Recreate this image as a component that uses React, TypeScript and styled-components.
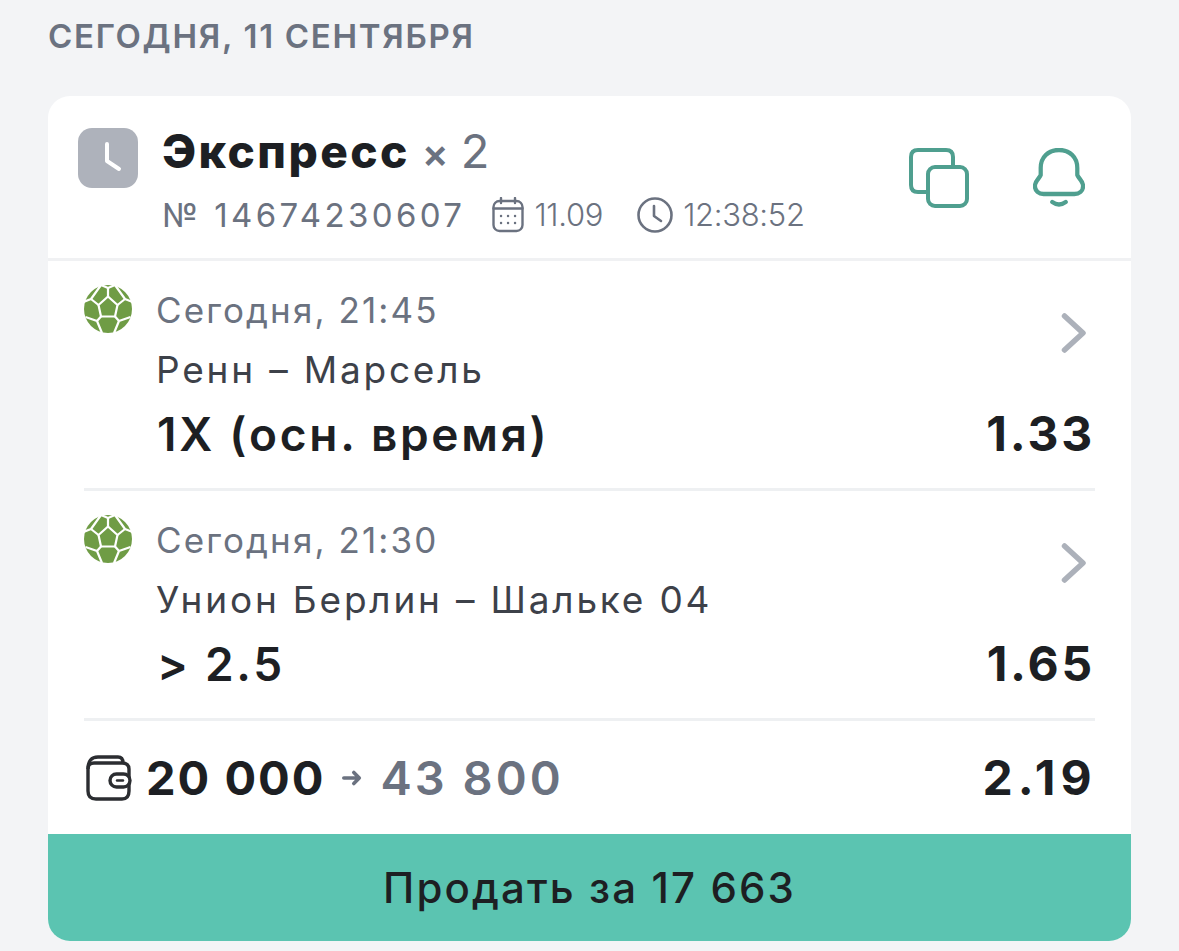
import styled, { createGlobalStyle } from 'styled-components';

const GlobalStyle = createGlobalStyle`
    html, body {
        margin: 0;
        padding: 0;
        background: #f3f4f6;
        overflow: hidden;
    }
    body {
        font-family: Inter, "Noto Sans", "Liberation Sans", sans-serif;
    }
`;

const SoccerBall = () => (
    <svg width="50" height="50" viewBox="1 1 50 50">
        <circle cx="25" cy="25" r="24" fill="#6f9c45"/>
        <g stroke="#fff" strokeWidth="2.2" fill="none" strokeLinejoin="round">
            <polygon points="25,12.5 34.5,21 32,32.5 18,32.5 15.5,21"/>
            <path d="M25 12.5 L25 4 M34.5 21 L42 15 M32 32.5 L36 37 M18 32.5 L14 37 M15.5 21 L8 15"/>
            <path d="M18 1 L25 4 L32 1 M32 1 L42 15 L49.5 18 M18 1 L8 15 L0.5 18"/>
            <path d="M31 49 L36 37 L47.5 33 M19 49 L14 37 L2.5 33"/>
        </g>
    </svg>
);

const Chevron = () => (
    <ChevronSvg width="26" height="40" viewBox="0 0 26 40">
        <path d="M3.5 3 L22 20 L3.5 37" fill="none" stroke="#acb1ba" strokeWidth="5.5" strokeLinecap="round" strokeLinejoin="round"/>
    </ChevronSvg>
);

type BetProps = { time: string; teams: string; pick: string; odds: string };

const Bet = ({ time, teams, pick, odds }: BetProps) => (
    <BetRow>
        <BallCol><SoccerBall/></BallCol>
        <BetBody>
            <BetTime>{time}</BetTime>
            <BetTeams>{teams}</BetTeams>
            <BetBottom>
                <BetPick>{pick}</BetPick>
                <BetOdds>{odds}</BetOdds>
            </BetBottom>
        </BetBody>
        <Chevron/>
    </BetRow>
);

export default function App() {
    return (
        <Page>
            <GlobalStyle/>
            <DayTitle>СЕГОДНЯ, 11 СЕНТЯБРЯ</DayTitle>
            <Card>
                <Header>
                    <StatusIcon>
                        <svg width="60" height="60" viewBox="0 0 60 60">
                            <path d="M29 16 V33 L41 41" fill="none" stroke="#fff" strokeWidth="4" strokeLinecap="round" strokeLinejoin="round"/>
                        </svg>
                    </StatusIcon>
                    <HeaderText>
                        <TitleLine>
                            <Title>Экспресс</Title>
                            <Times>×</Times>
                            <Count>2</Count>
                        </TitleLine>
                        <MetaLine>
                            <TicketNo>№ 14674230607</TicketNo>
                            <MetaItem>
                                <svg width="32" height="36" viewBox="0 0 32 36" fill="none" stroke="#6b7280" strokeWidth="2.4" strokeLinecap="round">
                                    <rect x="1.5" y="4" width="29" height="30" rx="6"/>
                                    <path d="M1.5 11.5 H30.5 M9 1 V6 M23 1 V6"/>
                                    <path d="M9 19 h.1 M16 19 h.1 M23 19 h.1 M9 26 h.1 M16 26 h.1 M23 26 h.1" strokeWidth="2.4"/>
                                </svg>
                                <MetaValue>11.09</MetaValue>
                            </MetaItem>
                            <MetaItem>
                                <svg width="36" height="36" viewBox="0 0 36 36" fill="none" stroke="#6b7280" strokeWidth="2.6" strokeLinecap="round" strokeLinejoin="round">
                                    <circle cx="18" cy="18" r="16.5"/>
                                    <path d="M17 9 V19 L24 24"/>
                                </svg>
                                <MetaValue>12:38:52</MetaValue>
                            </MetaItem>
                        </MetaLine>
                    </HeaderText>
                    <HeaderActions>
                        <svg width="60" height="60" viewBox="0 0 60 60" fill="none" stroke="#4f9f8f" strokeWidth="4">
                            <path d="M21 44 H9 Q2 44 2 37 V9 Q2 2 9 2 H37 Q44 2 44 9 V19"/>
                            <rect x="19" y="19" width="39" height="39" rx="7"/>
                        </svg>
                        <svg width="52" height="60" viewBox="0 0 54 60" preserveAspectRatio="none" fill="none" stroke="#4f9f8f" strokeWidth="4.4" strokeLinecap="round">
                            <path d="M8 27 V20 C8 9 16 2 27 2 C38 2 46 9 46 20 V27 C47 30 52 33 52 38 C52 43 48 46 43 46 H11 C6 46 2 43 2 38 C2 33 7 30 8 27 Z"/>
                            <path d="M20 54 Q27 59 34 54"/>
                        </svg>
                    </HeaderActions>
                </Header>
                <Bet time="Сегодня, 21:45" teams="Ренн – Марсель" pick="1X (осн. время)" odds="1.33"/>
                <Divider/>
                <Bet time="Сегодня, 21:30" teams="Унион Берлин – Шальке 04" pick="> 2.5" odds="1.65"/>
                <Divider/>
                <Totals>
                    <svg width="46" height="46" viewBox="0 0 46 46" fill="none" stroke="#2b2d31" strokeWidth="3.4" strokeLinejoin="round">
                        <path d="M2 14 V36 Q2 44 10 44 H36 Q43 44 43 36 V14 Q43 8 36 8 H8 Q2 8 2 14 Z"/>
                        <path d="M2 14 Q2 2 12 2 H32 Q37 2 37 8"/>
                        <rect x="24" y="19" width="20" height="13" rx="6.5" fill="#fff"/>
                        <path d="M31 25.5 H37" strokeWidth="2.4" strokeLinecap="round"/>
                    </svg>
                    <Stake>20 000</Stake>
                    <svg width="20" height="20" viewBox="0 0 22 22" fill="none" stroke="#6b7280" strokeWidth="4" strokeLinecap="round" strokeLinejoin="round">
                        <path d="M2 11 H19 M13 5 L19 11 L13 17"/>
                    </svg>
                    <Payout>43 800</Payout>
                    <TotalOdds>2.19</TotalOdds>
                </Totals>
                <SellButton>Продать за 17 663</SellButton>
            </Card>
        </Page>
    );
}

const Page = styled.div`
    width: 1179px;
    height: 951px;
    padding: 0 48px;
    box-sizing: border-box;
    overflow: hidden;
    background: #f3f4f6;
`;

const DayTitle = styled.h2`
    margin: 0;
    height: 96px;
    padding-top: 17px;
    box-sizing: border-box;
    font-size: 33px;
    line-height: 38px;
    font-weight: 600;
    letter-spacing: 1.7px;
    color: #6b7280;
`;

const Card = styled.div`
    height: 845px;
    background: #fff;
    border-radius: 22px;
    overflow: hidden;
    display: flex;
    flex-direction: column;
`;

const Header = styled.div`
    height: 165px;
    box-sizing: border-box;
    border-bottom: 3px solid #f0f1f3;
    padding: 32px 46px 0 30px;
    display: flex;
    align-items: flex-start;
`;

const StatusIcon = styled.div`
    width: 60px;
    height: 60px;
    border-radius: 14px;
    background: #aeb2bb;
    flex: none;
`;

const HeaderText = styled.div`
    margin-left: 24px;
    flex: 1;
`;

const TitleLine = styled.div`
    display: flex;
    align-items: baseline;
    height: 50px;
    margin-top: -2px;
`;

const Title = styled.span`
    font-size: 46px;
    line-height: 50px;
    font-weight: 800;
    letter-spacing: 2.4px;
    color: #1d1f23;
`;

const Times = styled.span`
    font-size: 40px;
    line-height: 50px;
    font-weight: 600;
    color: #6b7280;
    margin-left: 12px;
`;

const Count = styled.span`
    font-size: 47px;
    line-height: 50px;
    font-weight: 400;
    color: #6b7280;
    margin-left: 12px;
`;

const MetaLine = styled.div`
    display: flex;
    align-items: center;
    margin-top: 19px;
    color: #6b7280;
    font-size: 33px;
    line-height: 40px;
`;

const TicketNo = styled.span`
    font-weight: 400;
    letter-spacing: 3.4px;
    margin-right: 27px;
`;

const MetaItem = styled.span`
    display: flex;
    align-items: center;
    gap: 10px;
    margin-right: 34px;
`;

const MetaValue = styled.span`
    font-size: 31px;
    font-weight: 300;
    letter-spacing: -0.3px;
`;

const HeaderActions = styled.div`
    display: flex;
    align-items: center;
    gap: 64px;
    padding-top: 20px;
`;

const BetRow = styled.div`
    position: relative;
    height: 227px;
    box-sizing: border-box;
    padding: 24px 36px 0 36px;
    display: flex;
`;

const BallCol = styled.div`
    flex: none;
    width: 72px;
`;

const BetBody = styled.div`
    flex: 1;
`;

const BetTime = styled.div`
    font-size: 35px;
    line-height: 50px;
    letter-spacing: 2.1px;
    color: #6b7280;
`;

const BetTeams = styled.div`
    font-size: 37px;
    line-height: 50px;
    letter-spacing: 2.8px;
    margin-top: 10px;
    color: #3d4149;
`;

const BetBottom = styled.div`
    display: flex;
    justify-content: space-between;
    align-items: baseline;
    margin-top: 12px;
    color: #1d1f23;
`;

const BetPick = styled.div`
    font-size: 46px;
    line-height: 54px;
    font-weight: 600;
    letter-spacing: 2.7px;
    padding-left: 1px;
`;

const BetOdds = styled.div`
    font-size: 48px;
    line-height: 54px;
    font-weight: 700;
    letter-spacing: 2.8px;
`;

const ChevronSvg = styled.svg`
    position: absolute;
    right: 44px;
    top: 52px;
`;

const Divider = styled.div`
    height: 3px;
    margin: 0 36px;
    background: #eef0f2;
    flex: none;
`;

const Totals = styled.div`
    height: 113px;
    box-sizing: border-box;
    padding: 0 34px 0 38px;
    display: flex;
    align-items: center;
    gap: 16px;

    > svg:first-child {
        margin-right: -2px;
    }
`;

const Stake = styled.span`
    font-size: 47px;
    font-weight: 700;
    letter-spacing: 2px;
    color: #1d1f23;
`;

const Payout = styled.span`
    font-size: 47px;
    font-weight: 600;
    letter-spacing: 3px;
    margin-left: 3px;
    color: #6b7280;
`;

const TotalOdds = styled.span`
    margin-left: auto;
    font-size: 48px;
    font-weight: 700;
    letter-spacing: 5.2px;
    color: #1d1f23;
`;

const SellButton = styled.div`
    flex: 1;
    display: flex;
    align-items: center;
    justify-content: center;
    background: #5bc4b1;
    font-size: 42px;
    font-weight: 500;
    letter-spacing: 2.1px;
    color: #1d1f23;
`;
